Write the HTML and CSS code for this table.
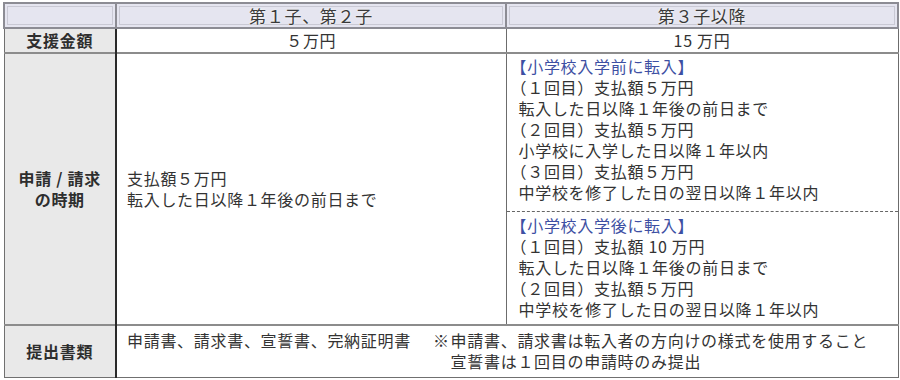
FILE: index.html
```html
<!DOCTYPE html>
<html lang="ja">
<head>
<meta charset="utf-8">
<link rel="stylesheet" href="styles.css">
</head>
<body>
<table class="tbl">
  <colgroup>
    <col class="c1"><col class="c2"><col class="c3">
  </colgroup>
  <thead>
    <tr>
      <th class="hd"></th>
      <th class="hd">第１子、第２子</th>
      <th class="hd">第３子以降</th>
    </tr>
  </thead>
  <tbody>
    <tr class="r-amount">
      <th class="lbl">支援金額</th>
      <td class="center">５万円</td>
      <td class="center">15 万円</td>
    </tr>
    <tr class="r-time">
      <th class="lbl">申請 / 請求<br>の時期</th>
      <td class="mid">支払額５万円<br>転入した日以降１年後の前日まで</td>
      <td class="split">
        <div class="sec sec-a">
          <div class="blue">【小学校入学前に転入】</div>
          <div>（１回目）支払額５万円</div>
          <div>転入した日以降１年後の前日まで</div>
          <div>（２回目）支払額５万円</div>
          <div>小学校に入学した日以降１年以内</div>
          <div>（３回目）支払額５万円</div>
          <div>中学校を修了した日の翌日以降１年以内</div>
        </div>
        <div class="sec sec-b">
          <div class="blue">【小学校入学後に転入】</div>
          <div>（１回目）支払額 10 万円</div>
          <div>転入した日以降１年後の前日まで</div>
          <div>（２回目）支払額５万円</div>
          <div>中学校を修了した日の翌日以降１年以内</div>
        </div>
      </td>
    </tr>
    <tr class="r-docs">
      <th class="lbl">提出書類</th>
      <td colspan="2" class="docs">
        <div class="docs-row">
          <span class="docs-list">申請書、請求書、宣誓書、完納証明書</span>
          <span class="note-mark">※</span>
          <div class="note">申請書、請求書は転入者の方向けの様式を使用すること<br>宣誓書は１回目の申請時のみ提出</div>
        </div>
      </td>
    </tr>
  </tbody>
</table>
</body>
</html>
```
FILE: styles.css
```css
html, body {
  margin: 0;
  padding: 0;
  background: #ffffff;
}
body {
  padding: 2px 3px 0 3px;
  font-family: "Noto Sans CJK JP", "Noto Sans", sans-serif;
  font-size: 16px;
  letter-spacing: 0.7px;
  color: #333333;
}
.tbl {
  border-collapse: collapse;
  width: 894px;
  table-layout: fixed;
  border: 1px solid #707070;
}
.c1 { width: 112px; }
.c2 { width: 390px; }
.c3 { width: 392px; }

th, td {
  padding: 0;
  line-height: 21px;
  font-weight: normal;
}
.hd {
  height: 23px;
  background: #e5e5f0;
  border: 2px solid #8c8c94;
  box-shadow: inset 0 0 0 2px #e5e5f0, inset 0 0 0 3px #c9c9d4;
  font-size: 17px;
  text-align: center;
  vertical-align: middle;
  color: #3a3a3a;
  text-shadow: 0 0 2px #ffffff, 0 0 2px #ffffff, 0 0 1px #b0b0b8;
}
.lbl {
  background: #e9e9e9;
  font-weight: bold;
  text-align: center;
  vertical-align: middle;
  border-right: 2px solid #2a2a2a;
  border-top: 2px solid #8c8c8c;
  color: #2e2e2e;
}
td {
  border-top: 2px solid #8c8c8c;
  border-left: 1px solid #222222;
  border-right: 1px solid #6c6c6c;
  vertical-align: middle;
}
.r-amount th, .r-amount td { height: 23px; }
.center { text-align: center; }
.mid { padding-left: 10px; }
.split { padding: 0; vertical-align: top; }
.sec {
  padding-left: 12px;
  text-spacing-trim: trim-start;
}
.sec-a {
  padding-top: 2px;
  padding-bottom: 8px;
  border-bottom: 1px dashed #666666;
}
.sec-b {
  padding-top: 3px;
  padding-bottom: 4px;
}
.blue { color: #3d4fa3; }
.docs { padding: 4px 0 5px 10px; }
.docs-row {
  display: flex;
  align-items: flex-start;
}
.docs-list { margin-right: 22px; }
.note-mark { margin-right: 1px; }
```
